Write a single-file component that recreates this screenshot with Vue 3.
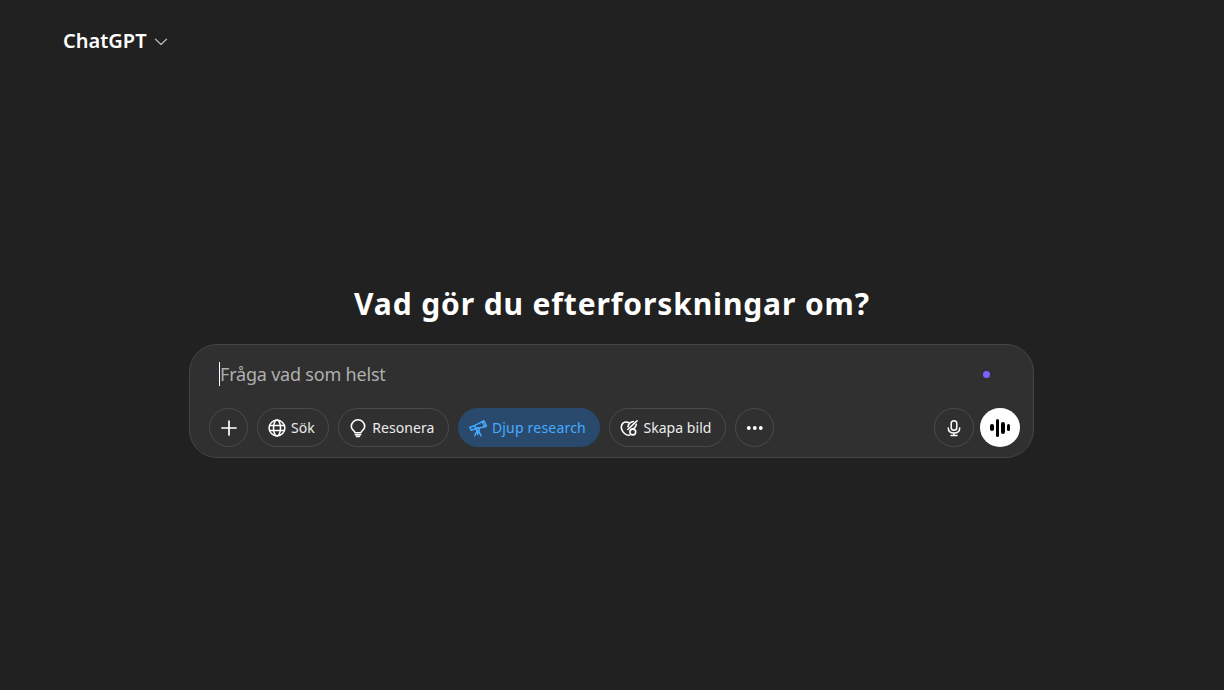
<template>
  <div class="page">
    <header class="topbar">
      <button class="model">
        <span>ChatGPT</span>
        <svg width="16" height="16" viewBox="0 0 16 16" fill="none" stroke="#b4b4b4" stroke-width="1.3" stroke-linecap="round" stroke-linejoin="round"><path d="M2.500 6.300 8 11.500l5.500-5.200"/></svg>
      </button>
    </header>

    <main class="center">
      <h1>Vad gör du efterforskningar om?</h1>
      <div class="composer">
        <div class="input-row">
          <span class="caret"></span>
          <span class="placeholder">Fråga vad som helst</span>
          <span class="dot"></span>
        </div>
        <div class="tools">
          <button class="round">
            <svg width="20" height="20" viewBox="0 0 20 20" fill="none" stroke="#fff" stroke-width="1.7" stroke-linecap="round"><path d="M10 3v14M3 10h14"/></svg>
          </button>
          <button class="pill">
            <svg width="20" height="20" viewBox="0 0 20 20" fill="none" stroke="#fff" stroke-width="1.5"><circle cx="10" cy="10" r="7.900"/><ellipse cx="10" cy="10" rx="3.500" ry="7.900"/><path d="M2.400 7.500h15.200M2.400 12.500h15.200"/></svg>
            <span>Sök</span>
          </button>
          <button class="pill">
            <svg width="20" height="20" viewBox="0 0 20 20" fill="none" stroke="#fff" stroke-width="1.6" stroke-linecap="round" stroke-linejoin="round"><path d="M7 14.800c0-2-3.700-2.900-3.700-6.300a6.700 6.700 0 0 1 13.400 0c0 3.400-3.700 4.300-3.700 6.300z"/><path d="M7.300 16.800h5.400M8.500 18.500h3"/></svg>
            <span>Resonera</span>
          </button>
          <button class="pill active">
            <svg width="20" height="20" viewBox="0 0 20 20" fill="none" stroke="#48aaff" stroke-width="1.500" stroke-linecap="round" stroke-linejoin="round"><path d="M1.800 9.300 3.200 12.300 7.700 10.700 6.500 7.700z"/><path d="M6.500 7.700 14.300 3.600 16.800 8.800 7.700 10.700"/><path d="M14.300 3.600 16 2.800 18.500 8 16.800 8.800"/><circle cx="9.800" cy="11.300" r="1.500"/><path d="M9 12.800 6.800 17.800M10.600 12.800l2.400 5M9.800 13v3.500"/></svg>
            <span>Djup research</span>
          </button>
          <button class="pill">
            <svg width="20" height="20" viewBox="0 0 20 20" fill="none" stroke="#fff" stroke-width="1.600" stroke-linecap="round" stroke-linejoin="round"><path d="M9.500 4.500C7 3.500 4 4.300 2.800 6.800 1.500 9.500 2.800 13.300 5.500 15.500c1.700 1.400 3.300 1.900 5 1.700"/><path d="M18 2.800 8.800 11.500"/><path d="M14.300 3.500c-2.800.6-5 2.800-5.300 5.300M17.300 6.300c-.5 2.600-2.800 4.800-5.500 5.200"/><circle cx="13.800" cy="14" r="2.900"/></svg>
            <span>Skapa bild</span>
          </button>
          <button class="round">
            <svg width="20" height="20" viewBox="0 0 20 20" fill="#fff"><circle cx="3.800" cy="10" r="1.900"/><circle cx="9.800" cy="10" r="1.900"/><circle cx="15.800" cy="10" r="1.900"/></svg>
          </button>
          <div class="spacer"></div>
          <button class="round mic">
            <svg width="20" height="20" viewBox="0 0 20 20" fill="none" stroke="#fff" stroke-width="1.5" stroke-linecap="round"><rect x="7.200" y="2.800" width="5.600" height="9.400" rx="2.800"/><path d="M4.300 10c0 3.300 2.500 5 5.700 5s5.700-1.700 5.700-5M10 15v2.500M7 17.600h6"/></svg>
          </button>
          <button class="voice">
            <span class="b" style="height: 7px"></span>
            <span class="b" style="height: 18px"></span>
            <span class="b" style="height: 12px"></span>
            <span class="b" style="height: 7px"></span>
          </button>
        </div>
      </div>
    </main>
  </div>
</template>

<script setup>
</script>

<style>
html, body {
  margin: 0;
  background: #212121;
}
</style>

<style scoped>
.page {
  height: 690px;
  background: #212121;
  color: #fff;
  font-family: "Noto Sans", sans-serif;
  overflow: hidden;
}
button {
  font-family: inherit;
  color: inherit;
  background: none;
  border: 0;
  padding: 0;
}
.topbar {
  height: 82px;
  padding-left: 63px;
  box-sizing: border-box;
  padding-top: 27px;
}
.model {
  display: flex;
  align-items: center;
  gap: 6px;
  font-size: 20px;
  font-weight: 600;
  line-height: 28px;
}
.center {
  display: flex;
  flex-direction: column;
  align-items: center;
  padding-top: 201px;
}
h1 {
  margin: 0 0 20px;
  font-size: 30px;
  font-weight: 700;
  line-height: 41px;
  letter-spacing: 0.88px;
}
.composer {
  width: 845px;
  height: 114px;
  box-sizing: border-box;
  margin-right: 1px;
  background: #303030;
  border: 1px solid #454545;
  border-radius: 28px;
  padding: 0 13px 0 19px;
}
.input-row {
  display: flex;
  align-items: center;
  height: 58px;
  padding-left: 10px;
  padding-right: 30px;
}
.caret {
  width: 1px;
  height: 24px;
  background: #fff;
}
.placeholder {
  font-size: 18px;
  letter-spacing: -0.2px;
  color: #afafaf;
  flex: 1;
}
.dot {
  width: 7px;
  height: 7px;
  border-radius: 50%;
  background: #7b61ff;
}
.tools {
  display: flex;
  align-items: center;
  gap: 9px;
  margin-top: 5px;
}
.round,
.pill {
  height: 39px;
  box-sizing: border-box;
  border: 1px solid #4b4b4b;
  border-radius: 20px;
  display: flex;
  align-items: center;
}
.round {
  width: 39px;
  justify-content: center;
}
.pill {
  padding: 0 13.5px 0 9px;
  gap: 4px;
  font-size: 14px;
  letter-spacing: 0.05px;
  color: #ececec;
}
.active {
  background: #2a4a6d;
  border-color: #2a4a6d;
  color: #48aaff;
  letter-spacing: 0.2px;
}
.spacer {
  flex: 1;
}
.mic {
  width: 40px;
  margin-right: -3px;
}
.voice {
  width: 40px;
  height: 39px;
  border-radius: 50%;
  background: #fff;
  display: flex;
  align-items: center;
  justify-content: center;
  gap: 2px;
}
.b {
  width: 3.5px;
  border-radius: 2px;
  background: #000;
}
</style>
